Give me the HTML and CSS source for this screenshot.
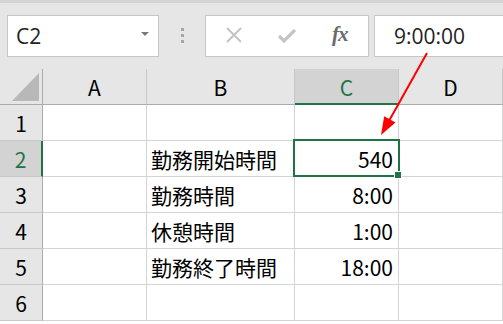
FILE: index.html
```html
<!DOCTYPE html>
<html lang="ja">
<head>
    <meta charset="UTF-8">
    <title>勤務時間</title>
    <link rel="stylesheet" href="styles.css">
</head>
<body>
    <div class="toolbar">
        <div class="name-box">
            <span>C2</span>
            <svg class="drop" width="8" height="5" viewBox="0 0 8 5"><path d="M0 0h8L4 4z" fill="#7a7a7a"/></svg>
        </div>
        <div class="grip">
            <i></i><i></i><i></i>
        </div>
        <div class="fx-buttons">
            <svg class="btn-x" width="16" height="16" viewBox="0 0 16 16"><path d="M1 1L15 15M15 1L1 15" stroke="#c4c4c4" stroke-width="2" fill="none"/></svg>
            <svg class="btn-ok" width="18" height="14" viewBox="0 0 18 14"><path d="M1 7l5 5L17 1" stroke="#c4c4c4" stroke-width="3.2" fill="none"/></svg>
            <span class="fx">fx</span>
        </div>
        <div class="formula">9:00:00</div>
    </div>

    <div class="sheet">
        <div class="corner">
            <svg width="28" height="28" viewBox="0 0 28 28"><path d="M27 0V28H0z" fill="#b8b8b8"/></svg>
        </div>
        <div class="col-head">A</div>
        <div class="col-head">B</div>
        <div class="col-head active">C</div>
        <div class="col-head">D</div>

        <div class="row-head">1</div>
        <div class="cell"></div>
        <div class="cell"></div>
        <div class="cell"></div>
        <div class="cell"></div>

        <div class="row-head active">2</div>
        <div class="cell"></div>
        <div class="cell">勤務開始時間</div>
        <div class="cell num selected">540<span class="handle"></span></div>
        <div class="cell"></div>

        <div class="row-head">3</div>
        <div class="cell"></div>
        <div class="cell">勤務時間</div>
        <div class="cell num">8:00</div>
        <div class="cell"></div>

        <div class="row-head">4</div>
        <div class="cell"></div>
        <div class="cell">休憩時間</div>
        <div class="cell num">1:00</div>
        <div class="cell"></div>

        <div class="row-head">5</div>
        <div class="cell"></div>
        <div class="cell">勤務終了時間</div>
        <div class="cell num">18:00</div>
        <div class="cell"></div>

        <div class="row-head">6</div>
        <div class="cell"></div>
        <div class="cell"></div>
        <div class="cell"></div>
        <div class="cell"></div>
    </div>

    <svg class="arrow" width="503" height="324" viewBox="0 0 503 324">
        <line x1="427" y1="53" x2="389.5" y2="120" stroke="#ff0000" stroke-width="2"/>
        <polygon points="381,135 395.5,122.5 384.2,116.2" fill="#ff0000"/>
    </svg>
</body>
</html>
```

FILE: styles.css
```css
body {
    margin: 0;
    width: 503px;
    height: 324px;
    overflow: hidden;
    position: relative;
    background-color: #ffffff;
    font-family: 'Noto Sans CJK JP', 'Noto Sans', sans-serif;
    color: #000000;
}

.toolbar {
    height: 69px;
    border-top: 3px solid #d4d4d4;
    background-color: #e6e6e6;
    display: flex;
    align-items: flex-start;
    padding: 12px 0 0 7px;
    box-sizing: border-box;
    overflow: hidden;
}

.name-box,
.fx-buttons,
.formula {
    height: 42px;
    box-sizing: border-box;
    background-color: #ffffff;
    border: 1px solid #c6c6c6;
    display: flex;
    align-items: center;
}

.name-box {
    width: 152px;
    padding: 0 9px 0 8px;
    justify-content: space-between;
    font-family: 'Open Sans', 'Noto Sans', sans-serif;
    font-size: 21px;
    color: #222222;
}

.name-box span {
    margin-top: -1px;
}

.drop {
    margin-top: -3px;
}

.grip {
    width: 46px;
    display: flex;
    flex-direction: column;
    align-items: center;
    gap: 3px;
    padding-top: 13px;
}

.grip i {
    display: block;
    width: 3px;
    height: 3px;
    background-color: #a6a6a6;
}

.fx-buttons {
    width: 164px;
    padding-left: 20px;
}

.btn-x {
    margin-top: -2px;
}

.btn-ok {
    margin-left: 36px;
}

.fx {
    margin-left: 36px;
    margin-top: -4px;
    font-family: 'Liberation Serif', serif;
    font-style: italic;
    font-weight: bold;
    font-size: 21px;
    color: #6a6a6a;
    letter-spacing: -1px;
}

.formula {
    flex: 1;
    margin-left: 5px;
    margin-right: -10px;
    padding-left: 19px;
    font-family: 'Open Sans', 'Noto Sans', sans-serif;
    font-size: 21px;
    color: #222222;
}

.sheet {
    display: grid;
    grid-template-columns: 43px 104px 148px 104px 1fr;
    grid-auto-rows: 36px;
    font-size: 21px;
}

.corner,
.col-head,
.row-head,
.cell {
    box-sizing: border-box;
    display: flex;
    align-items: flex-end;
    padding-bottom: 5px;
    line-height: 24px;
}

.corner {
    background-color: #e6e6e6;
    border-right: 1px solid #ababab;
    border-bottom: 1px solid #ababab;
    padding: 0 0 3px 12px;
}

.corner svg {
    display: block;
}

.col-head {
    background-color: #e6e6e6;
    justify-content: center;
    border-right: 1px solid #c8c8c8;
    border-bottom: 1px solid #ababab;
}

.col-head.active {
    background-color: #d3d3d3;
    color: #217346;
    border-bottom: 2px solid #217346;
    padding-bottom: 4px;
}

.row-head {
    background-color: #e6e6e6;
    justify-content: center;
    border-right: 1px solid #ababab;
    border-bottom: 1px solid #c8c8c8;
}

.row-head.active {
    background-color: #d3d3d3;
    color: #217346;
    border-right: 2px solid #217346;
}

.cell {
    position: relative;
    border-right: 1px solid #d4d4d4;
    border-bottom: 1px solid #d4d4d4;
    padding-left: 4px;
    padding-right: 5px;
    white-space: nowrap;
}

.cell.num {
    justify-content: flex-end;
}

.cell.selected::after {
    content: "";
    position: absolute;
    top: -2px;
    left: -2px;
    right: -2px;
    bottom: -1px;
    border: 2px solid #217346;
}

.handle {
    position: absolute;
    right: -4px;
    bottom: -3px;
    width: 6px;
    height: 6px;
    background-color: #217346;
    border: 1px solid #ffffff;
    z-index: 1;
}

.arrow {
    position: absolute;
    top: 0;
    left: 0;
    pointer-events: none;
}
```
